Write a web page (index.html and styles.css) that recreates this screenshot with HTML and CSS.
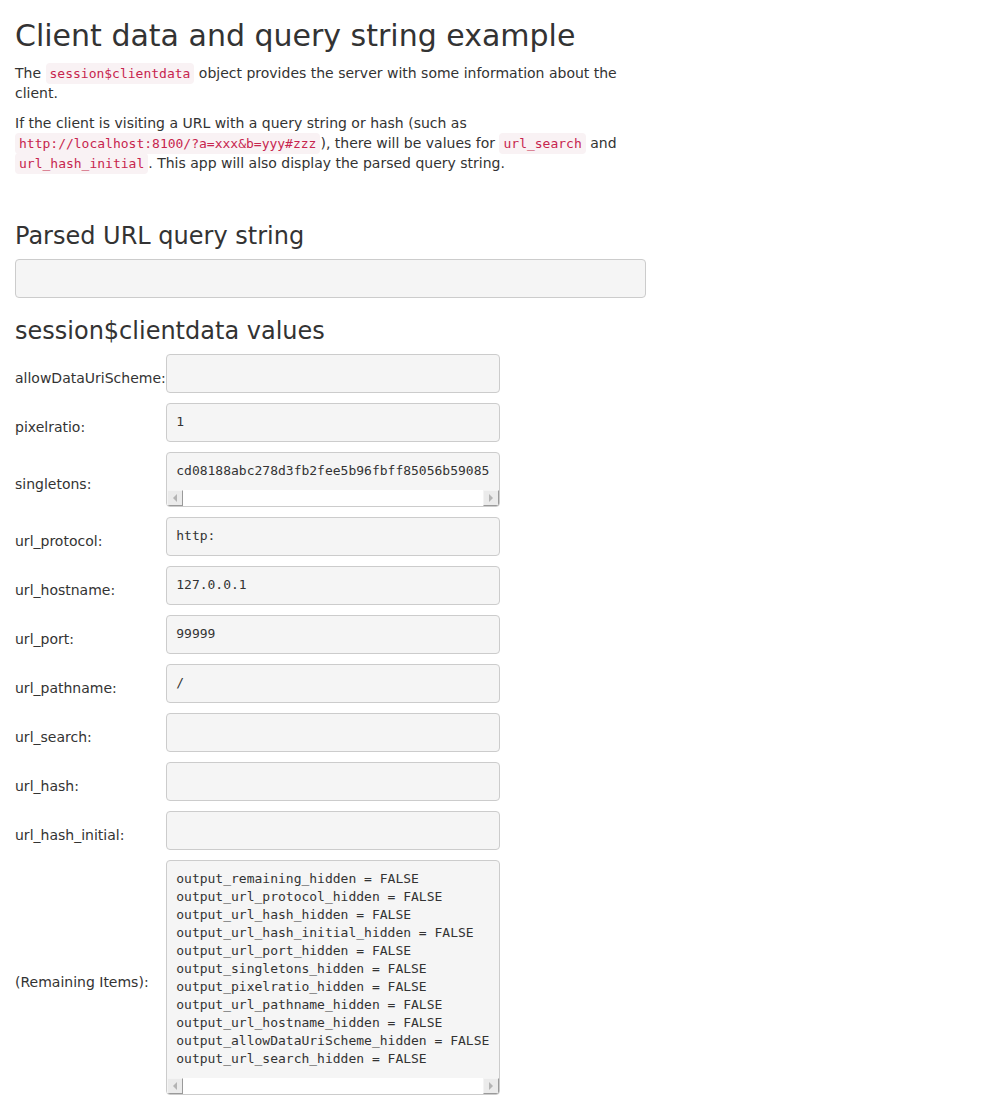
FILE: index.html
```html
<!DOCTYPE html>
<html>
<head>
<meta charset="utf-8">
<title>Client data and query string example</title>
<link rel="stylesheet" href="styles.css">
</head>
<body>
<div class="container">
  <div class="col">
    <h2 class="title">Client data and query string example</h2>
    <p>The <code>session$clientdata</code> object provides the server with some information about the client.</p>
    <p>If the client is visiting a URL with a query string or hash (such as <code>http://localhost:8100/?a=xxx&amp;b=yyy#zzz</code>), there will be values for <code>url_search</code> and <code>url_hash_initial</code>. This app will also display the parsed query string.</p>

    <h3 class="section first">Parsed URL query string</h3>
    <pre class="out wide"></pre>

    <h3 class="section second">session$clientdata values</h3>
    <div class="values">
      <div class="label">allowDataUriScheme:</div><pre class="out"></pre>
      <div class="label">pixelratio:</div><pre class="out">1</pre>
      <div class="label">singletons:</div>
      <div class="out-box">
        <pre class="out-text">cd08188abc278d3fb2fee5b96fbff85056b59085</pre>
        <div class="hscroll"><span class="sb-btn left"><i></i></span><span class="sb-btn right"><i></i></span></div>
      </div>
      <div class="label">url_protocol:</div><pre class="out">http:</pre>
      <div class="label">url_hostname:</div><pre class="out">127.0.0.1</pre>
      <div class="label">url_port:</div><pre class="out">99999</pre>
      <div class="label">url_pathname:</div><pre class="out">/</pre>
      <div class="label">url_search:</div><pre class="out"></pre>
      <div class="label">url_hash:</div><pre class="out"></pre>
      <div class="label">url_hash_initial:</div><pre class="out"></pre>
      <div class="label">(Remaining Items):</div>
      <div class="out-box">
        <pre class="out-text">output_remaining_hidden = FALSE
output_url_protocol_hidden = FALSE
output_url_hash_hidden = FALSE
output_url_hash_initial_hidden = FALSE
output_url_port_hidden = FALSE
output_singletons_hidden = FALSE
output_pixelratio_hidden = FALSE
output_url_pathname_hidden = FALSE
output_url_hostname_hidden = FALSE
output_allowDataUriScheme_hidden = FALSE
output_url_search_hidden = FALSE</pre>
        <div class="hscroll"><span class="sb-btn left"><i></i></span><span class="sb-btn right"><i></i></span></div>
      </div>
    </div>
  </div>
</div>
</body>
</html>
```

FILE: styles.css
```css
html, body {
  margin: 0;
  padding: 0;
  background: #fff;
}
body {
  font-family: "DejaVu Sans", sans-serif;
  font-size: 14px;
  line-height: 20px;
  color: #333;
}
.container {
  padding: 0 15px;
}
.col {
  width: 631px;
}
.title {
  font-size: 30px;
  font-weight: 500;
  line-height: 1.1;
  margin: 19px 0 11px;
}
p {
  margin: 0 0 10px;
}
code {
  font-family: "DejaVu Sans Mono", monospace;
  font-size: 13px;
  line-height: 1;
  padding: 3px 4px;
  color: #c7254e;
  background: #f9f2f4;
  border-radius: 4px;
}
.section {
  font-size: 24px;
  font-weight: 500;
  line-height: 1.1;
  margin: 20px 0 10px;
}
.section.first {
  margin-top: 50px;
}
.section.second {
  margin-bottom: 9px;
}
.out,
.out-box {
  display: block;
  box-sizing: border-box;
  margin: 0 0 10px;
  font-family: "DejaVu Sans Mono", monospace;
  font-size: 13px;
  line-height: 18px;
  color: #333;
  background: #f5f5f5;
  border: 1px solid #ccc;
  border-radius: 4px;
}
.out {
  padding: 9.5px;
  min-height: 39px;
  white-space: pre;
  overflow: hidden;
}
.out-box {
  overflow: hidden;
}
.out-text {
  margin: 0;
  padding: 9.5px;
  font: inherit;
  white-space: pre;
  overflow: hidden;
}
.hscroll {
  display: flex;
  justify-content: space-between;
  height: 16px;
  background: #fff;
}
.sb-btn {
  box-sizing: border-box;
  width: 16px;
  height: 16px;
  background: #ebebeb;
  border-top: 1px solid #f4f4f4;
  border-left: 1px solid #f4f4f4;
  border-right: 1px solid #9a9a9a;
  border-bottom: 1px solid #9a9a9a;
  display: flex;
  align-items: center;
  justify-content: center;
}
.sb-btn i {
  width: 0;
  height: 0;
  border-top: 4px solid transparent;
  border-bottom: 4px solid transparent;
}
.sb-btn.left i {
  border-right: 4px solid #b4b4b4;
}
.sb-btn.right i {
  border-left: 4px solid #b4b4b4;
}
.wide {
  width: 631px;
}
.values {
  display: grid;
  grid-template-columns: auto 334px;
  align-items: center;
  width: max-content;
}
.values .out,
.values .out-box {
  width: 334px;
}
.label {
  align-self: center;
}
```
